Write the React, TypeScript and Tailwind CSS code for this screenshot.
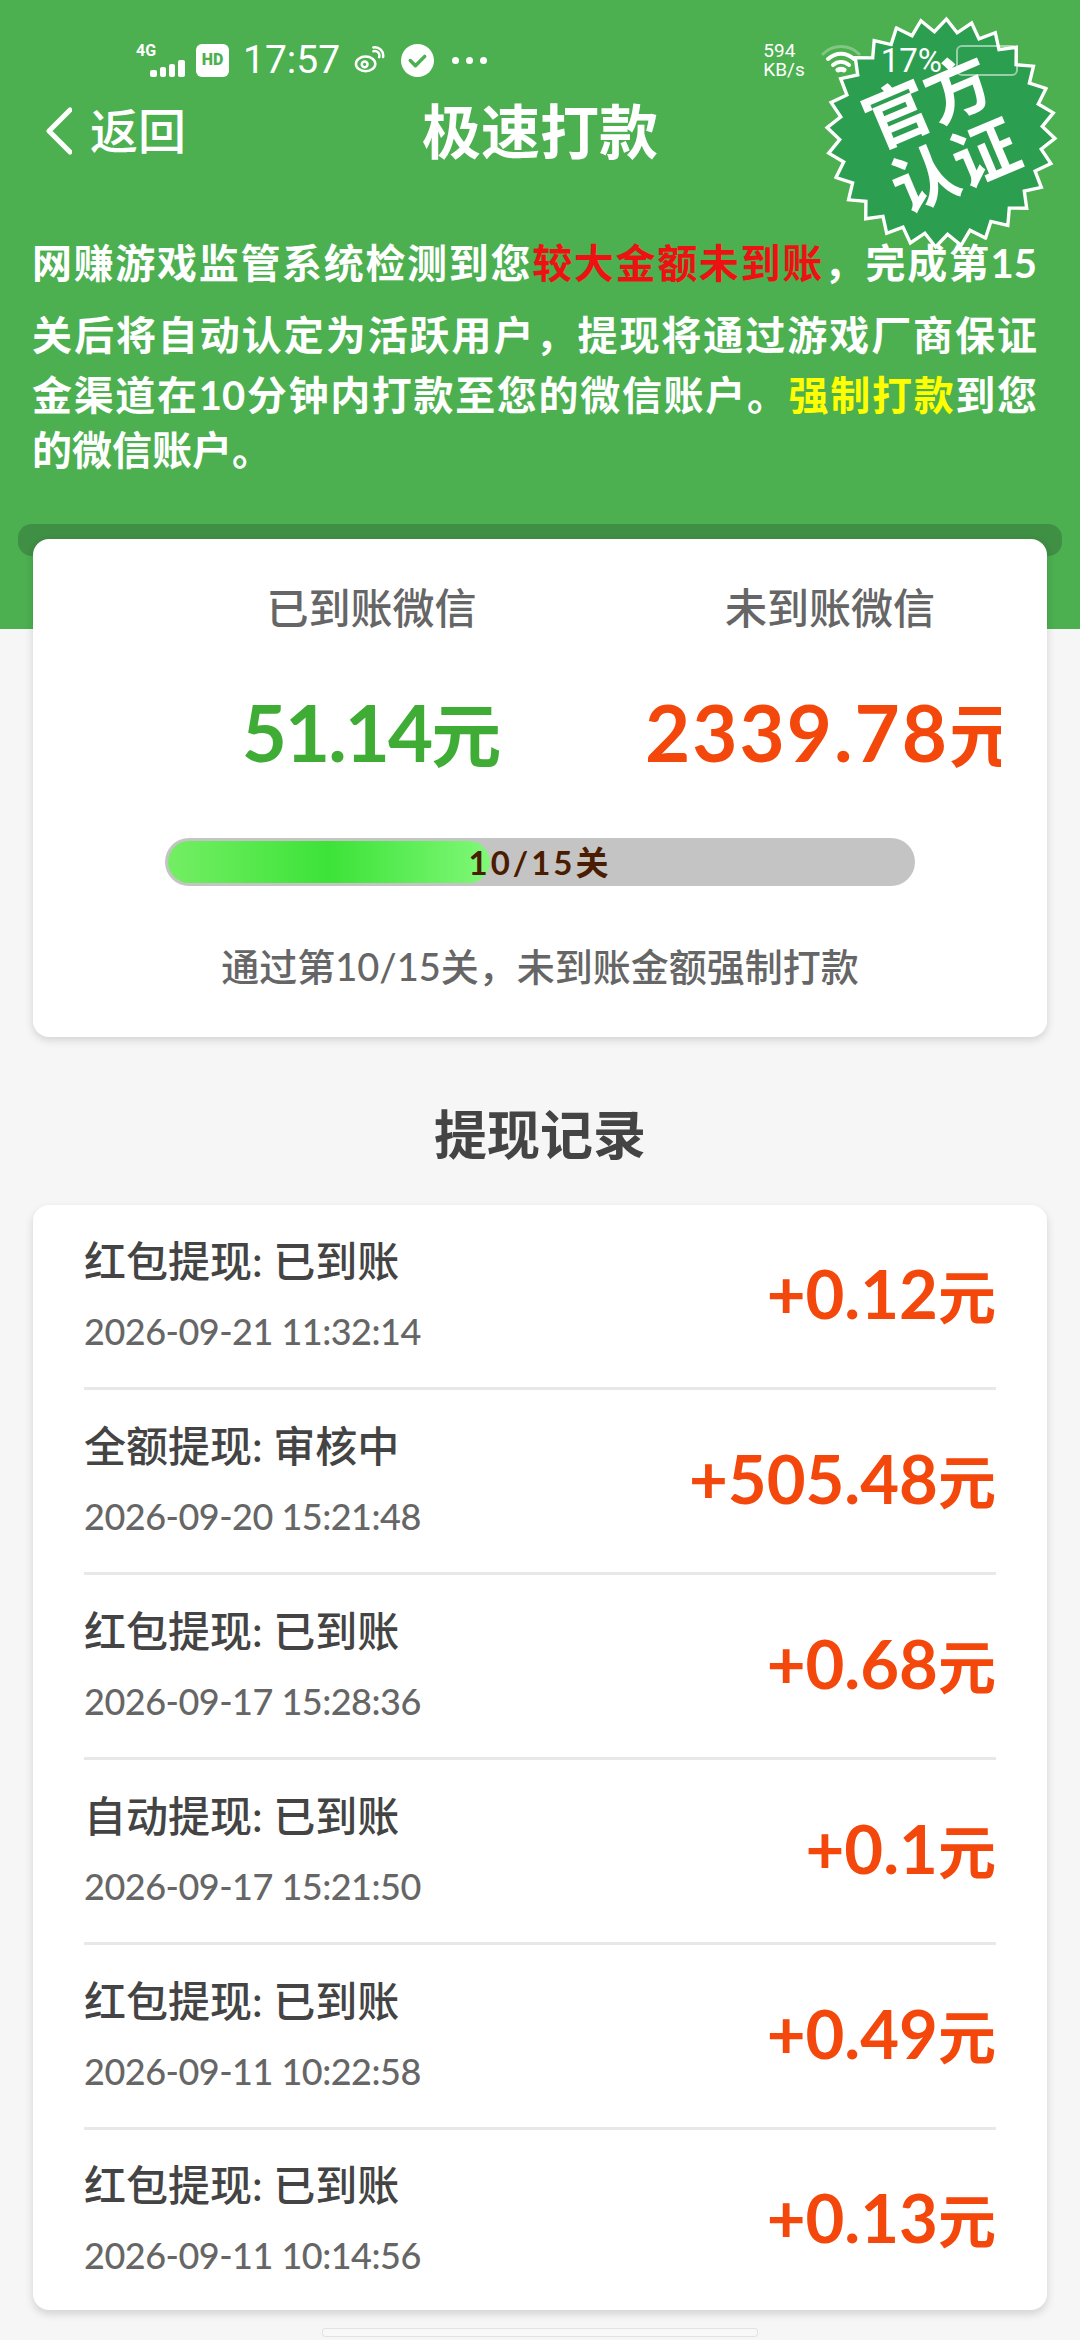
const cjk = "font-['Lato','Noto_Sans_CJK_SC',sans-serif]";

const records = [
  { title: "红包提现: 已到账", time: "2026-09-21 11:32:14", amount: "+0.12" },
  { title: "全额提现: 审核中", time: "2026-09-20 15:21:48", amount: "+505.48" },
  { title: "红包提现: 已到账", time: "2026-09-17 15:28:36", amount: "+0.68" },
  { title: "自动提现: 已到账", time: "2026-09-17 15:21:50", amount: "+0.1" },
  { title: "红包提现: 已到账", time: "2026-09-11 10:22:58", amount: "+0.49" },
  { title: "红包提现: 已到账", time: "2026-09-11 10:14:56", amount: "+0.13" },
];

// 28-point star with a white outline, rotated with the stamp
const starPoints = Array.from({ length: 56 }, (_, i) => {
  const r = i % 2 === 0 ? 118 : 105;
  const a = (i * Math.PI) / 28;
  return `${120 + r * Math.sin(a)},${120 - r * Math.cos(a)}`;
}).join(" ");

const StatusBar = () => (
  <div className="relative z-10 flex h-[60px] items-center pl-[136px] text-white font-['Roboto',sans-serif]">
    <div className="relative h-[34px] w-[54px]">
      <span className="absolute left-0 top-0 text-[16px] font-bold leading-[15px]">4G</span>
      <div className="absolute bottom-0 left-[14px] flex items-end gap-[3px]">
        <i className="block h-[7px] w-[7px] rounded-[2px] bg-white" />
        <i className="block h-[10px] w-[6px] rounded-[2px] bg-white" />
        <i className="block h-[13px] w-[6px] rounded-[2px] bg-white" />
        <i className="block h-[17px] w-[7px] rounded-[2px] bg-white" />
      </div>
    </div>
    <div className="ml-[6px] flex h-[33px] w-[33px] items-center justify-center rounded-[6px] bg-white text-[16px] font-black leading-none text-[#4caf50]">
      HD
    </div>
    <span className="ml-[14px] text-[39px] leading-none">17:57</span>
    <svg viewBox="0 0 32 28" className="ml-[14px] h-[30px] w-[31px]" fill="none" stroke="white" strokeWidth="2.6">
      <ellipse cx="12" cy="18" rx="10" ry="7.5" />
      <circle cx="11" cy="18.5" r="3" />
      <path d="M20 5c4-1 7 2 6 6M20 1c6-1 11 4 10 10" strokeLinecap="round" />
    </svg>
    <svg viewBox="0 0 32 32" className="ml-[16px] h-[33px] w-[33px]">
      <circle cx="16" cy="16" r="16" fill="white" />
      <path d="M9 16l5 5 9-9" fill="none" stroke="#4caf50" strokeWidth="3.4" strokeLinecap="round" strokeLinejoin="round" />
    </svg>
    <div className="ml-[18px] flex gap-[7px]">
      <i className="block h-[7px] w-[7px] rounded-full bg-white" />
      <i className="block h-[7px] w-[7px] rounded-full bg-white" />
      <i className="block h-[7px] w-[7px] rounded-full bg-white" />
    </div>
    <div className="ml-auto mr-[62px] flex items-center">
      <div className="text-[19px] leading-[19px]">
        <div>594</div>
        <div>KB/s</div>
      </div>
      <svg viewBox="0 0 40 32" className="ml-[16px] h-[32px] w-[40px]" fill="none" stroke="white" strokeLinecap="round">
        <path d="M2 10C12 0 28 0 38 10" strokeWidth="3" opacity="0.3" />
        <path d="M7 15c8-7 18-7 26 0" strokeWidth="4" />
        <path d="M12 21c5-4 11-4 16 0" strokeWidth="4" />
        <path d="M17 26c2-1 4-1 6 0" strokeWidth="5" />
      </svg>
      <span className="ml-[20px] text-[33px] leading-none">17%</span>
      <div className="ml-[14px] h-[31px] w-[62px] rounded-[6px] border-[2px] border-white/50" />
    </div>
  </div>
);

const Stamp = () => (
  <div className="absolute left-[825px] top-[17px] h-[232px] w-[232px] -rotate-[23deg]">
    <svg viewBox="0 0 240 240" className="absolute inset-0 h-full w-full">
      <polygon points={starPoints} fill="#2c9e50" stroke="white" strokeWidth="3.5" strokeLinejoin="miter" />
    </svg>
    <div className={`absolute inset-0 flex flex-col items-center justify-center text-[66px] font-bold leading-[70px] text-white ${cjk}`}>
      <span>官方</span>
      <span>认证</span>
    </div>
  </div>
);

const Record = ({ title, time, amount }: { title: string; time: string; amount: string }) => (
  <div className="mx-[51px] flex h-[185px] items-center justify-between border-b-[3px] border-[#e8e8e8] last:h-[180px] last:border-b-0">
    <div className="-mt-[6px]">
      <div className="text-[42px] font-medium leading-[56px] text-[#444444]">{title}</div>
      <div className="mt-[20px] text-[36px] font-medium leading-[44px] tracking-[-0.5px] text-[#666666]">{time}</div>
    </div>
    <div className="-mt-[6px] text-[67px] font-bold leading-none text-[#f4470b]">
      {amount}
      <span className="text-[58px]">元</span>
    </div>
  </div>
);

export default function App() {
  return (
    <div className={`relative h-[2340px] w-[1080px] overflow-hidden bg-[#f6f6f6] ${cjk}`}>
      <div className="h-[629px] bg-[#4caf50] pt-[30px] text-white">
        <StatusBar />
        <div className="relative mt-[9px] flex h-[64px] items-center justify-center">
          <div className="absolute left-[46px] flex items-center">
            <svg viewBox="0 0 26 48" className="h-[48px] w-[26px]" fill="none" stroke="white" strokeWidth="5" strokeLinecap="round" strokeLinejoin="round">
              <path d="M24 3L3 24l21 21" />
            </svg>
            <span className="ml-[18px] text-[48px] font-medium leading-none">返回</span>
          </div>
          <h1 className="text-[59px] font-bold leading-none">极速打款</h1>
        </div>
        <div className="mt-[70px] w-[1037px] pl-[32px] text-[40px] font-bold">
          <p className="leading-[60px] [text-align-last:justify]">
            网赚游戏监管系统检测到您<span className="text-[#ee1111]">较大金额未到账</span>，完成第15
          </p>
          <p className="mt-[12px] leading-[60px] [text-align-last:justify]">
            关后将自动认定为活跃用户，提现将通过游戏厂商保证
          </p>
          <p className="leading-[60px] [text-align-last:justify]">
            金渠道在10分钟内打款至您的微信账户。<span className="text-[#ffff00]">强制打款</span>到您
          </p>
          <p className="leading-[50px]">的微信账户。</p>
        </div>
      </div>
      <Stamp />

      <div className="absolute left-[18px] top-[524px] h-[32px] w-[1044px] rounded-[14px] bg-[#3f8f44]" />

      <div className="relative -mt-[90px] mx-[33px] h-[498px] rounded-[16px] bg-white shadow-[0_3px_8px_rgba(0,0,0,0.15)]">
        <div className="flex pt-[41px]">
          <div className="w-[507px] pl-[170px] text-center">
            <div className="text-[42px] font-medium leading-[56px] text-[#666666]">已到账微信</div>
            <div className="mt-[54px] whitespace-nowrap text-[78px] font-bold leading-[84px] tracking-[-2px] text-[#3fac35]">
              51.14<span className="text-[70px] tracking-normal">元</span>
            </div>
          </div>
          <div className="flex-1">
            <div className="pl-[73px] text-center text-[42px] font-medium leading-[56px] text-[#666666]">未到账微信</div>
            <div className="ml-[105px] mt-[54px] w-[356px] overflow-hidden whitespace-nowrap text-[78px] font-bold leading-[84px] tracking-[2px] text-[#f4470b]">
              2339.78<span className="text-[70px] tracking-normal">元</span>
            </div>
          </div>
        </div>
        <div className="relative mx-[132px] mt-[61px] h-[48px] rounded-full bg-[#c4c4c4] p-[3px]">
          <div className="h-full w-[322px] rounded-full bg-[linear-gradient(90deg,#74ee64_0%,#3ce338_50%,#80f878_100%)]" />
          <div className="absolute inset-0 flex items-center justify-center text-[33px] font-bold leading-none tracking-[3px] text-[#4a1c00]">
            10/15关
          </div>
        </div>
        <div className="mt-[55px] text-center text-[38px] font-medium leading-[50px] text-[#666666]">
          通过第10/15关，未到账金额强制打款
        </div>
      </div>

      <h2 className="mt-[68px] text-center text-[53px] font-bold leading-[60px] text-[#444444]">提现记录</h2>

      <div className="mx-[33px] mt-[40px] rounded-[16px] bg-white shadow-[0_4px_8px_rgba(0,0,0,0.15)]">
        {records.map((r, i) => (
          <Record key={i} {...r} />
        ))}
      </div>

      <div className="absolute left-[322px] top-[2328px] h-[9px] w-[436px] rounded-[3px] border border-[#e2e2e2] bg-[#f8f8f8]" />
    </div>
  );
}
